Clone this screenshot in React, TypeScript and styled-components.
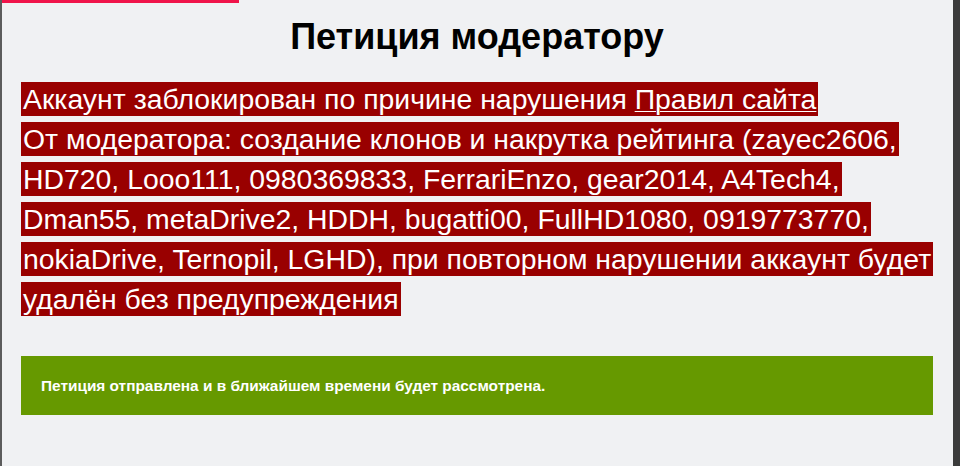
import React from "react"
import styled, { createGlobalStyle } from "styled-components"

const GlobalStyle = createGlobalStyle`
  html, body {
    margin: 0;
    padding: 0;
    height: 100%;
  }
  body {
    font-family: "Liberation Sans", Arial, sans-serif;
    background: #3b3b3b;
  }
  #root {
    height: 100%;
  }
`

const Frame = styled.div`
  display: flex;
  height: 100%;
`

const Page = styled.main`
  flex: 1;
  background: #f0f1f3;
  border-left: 2px solid #5c5c5c;
  overflow: hidden;
`

const RightEdge = styled.div`
  width: 7px;
  background: #3b3b3b;
`

const TopStripe = styled.div`
  width: 237px;
  height: 3px;
  background: #f0144a;
`

const Content = styled.div`
  padding: 0 20px 0 19px;
`

const Title = styled.h1`
  margin: 14px 0 0;
  font-size: 36px;
  line-height: 40px;
  font-weight: bold;
  color: #000;
  text-align: center;
`

const Notice = styled.p`
  margin: 22px 0 0;
  font-size: 28.4px;
  line-height: 40px;
  color: #fff;
`

const Mark = styled.span`
  background: #990000;
  padding: 1px 2px;
  -webkit-box-decoration-break: clone;
  box-decoration-break: clone;
`

const RulesLink = styled.a`
  color: #fff;
  text-decoration: underline;
  text-underline-offset: 2px;
  text-decoration-thickness: 1px;
`

const Success = styled.div`
  margin-top: 37px;
  height: 59px;
  display: flex;
  align-items: center;
  padding: 0 20px;
  background: #669900;
  color: #fff;
  font-size: 15.4px;
  font-weight: bold;
`

export default function App() {
  return (
    <>
      <GlobalStyle />
      <Frame>
        <Page>
          <TopStripe />
          <Content>
            <Title>Петиция модератору</Title>
            <Notice>
              <Mark>
                Аккаунт заблокирован по причине нарушения <RulesLink href="#">Правил сайта</RulesLink>
              </Mark>
              <br />
              <Mark>
                От модератора: создание клонов и накрутка рейтинга (zayec2606, HD720, Looo111, 0980369833,
                FerrariEnzo, gear2014, A4Tech4, Dman55, metaDrive2, HDDH, bugatti00, FullHD1080, 0919773770,
                nokiaDrive, Ternopil, LGHD), при повторном нарушении аккаунт будет удалён без предупреждения
              </Mark>
            </Notice>
            <Success>Петиция отправлена и в ближайшем времени будет рассмотрена.</Success>
          </Content>
        </Page>
        <RightEdge />
      </Frame>
    </>
  )
}
